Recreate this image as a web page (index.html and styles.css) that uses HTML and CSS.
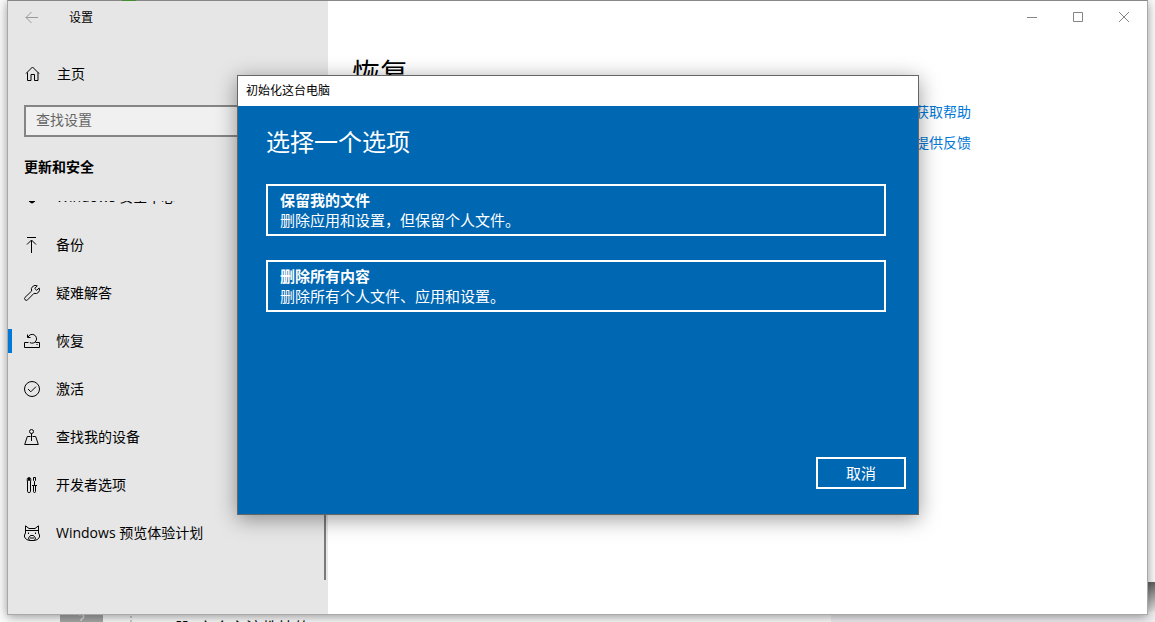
FILE: index.html
```html
<!DOCTYPE html>
<html lang="zh-CN">
<head>
<meta charset="utf-8">
<title>设置</title>
<link rel="stylesheet" href="styles.css">
</head>
<body>
<div class="backdrop" aria-hidden="true">
  <span class="backdrop-tab"></span>
  <span class="backdrop-tile">?</span>
  <span class="backdrop-dots"></span>
  <span class="backdrop-text">【】六个主流教技的</span>
  <span class="backdrop-strip"></span>
  <span class="backdrop-edge"></span>
</div>

<div class="window">
  <aside class="sidebar">
    <header class="titlebar">
      <button class="back" aria-label="后退">
        <svg width="14" height="14" viewBox="0 0 14 14"><path d="M13 6.500H1M6.500 1 1 6.500 6.500 12"/></svg>
      </button>
      <span class="app-title">设置</span>
    </header>
    <a class="home" href="#">
      <svg class="icon" width="16" height="16" viewBox="0 0 16 16"><path d="M1 7.500 7.500 1 14 7.500M2.500 6.500v8H6V8.500h3.500v6H13v-8"/></svg>
      <span>主页</span>
    </a>
    <input class="search" type="text" placeholder="查找设置" aria-label="查找设置">
    <h2 class="section-title">更新和安全</h2>
    <nav class="nav">
      <a class="nav-item nav-item-first" href="#">
        <svg class="icon" width="16" height="16" viewBox="0 0 16 16"><path d="M8 1 3 3v6q1 3 5 5 4-2 5-5V3z"/><path class="fill" d="M8 1v7h5v1q-1 3-5 5zM3 8h5v6q-4-2-5-5z"/></svg>
        <span>Windows 安全中心</span>
      </a>
      <a class="nav-item" href="#">
        <svg class="icon" width="16" height="16" viewBox="0 0 16 16"><path d="M3 .5h9M7.500 16V3.500M3 7.500 7.500 3 12 7.500"/></svg>
        <span>备份</span>
      </a>
      <a class="nav-item" href="#">
        <svg class="icon" width="16" height="16" viewBox="0 0 16 16"><path d="M13.300.9A4 4 0 0 0 7.700 6L1.100 12.300a1.700 1.700 0 0 0 2.500 2.500L10 8.300A4 4 0 0 0 15.200 3L12.700 5.300 10.700 3.400z"/></svg>
        <span>疑难解答</span>
      </a>
      <a class="nav-item nav-item-current" href="#" aria-current="page">
        <svg class="icon" width="16" height="16" viewBox="0 0 16 16"><path d="M4.500 9.500h-4v5h15v-5h-4M12.500 11.500h1M3.500 1.500v3h3M4 4.300A4.400 4.400 0 1 1 5.800 9.500"/></svg>
        <span>恢复</span>
      </a>
      <a class="nav-item" href="#">
        <svg class="icon" width="16" height="16" viewBox="0 0 16 16"><circle cx="8" cy="8" r="7.500"/><path d="m4 8 2.800 2.800L12 5.600"/></svg>
        <span>激活</span>
      </a>
      <a class="nav-item" href="#">
        <svg class="icon" width="16" height="16" viewBox="0 0 16 16"><circle cx="7.500" cy="2.500" r="2"/><path d="M7.500 4.500V12M6.500 7.500H3.300L.7 15.500h13.600L11.700 7.500H8.500"/></svg>
        <span>查找我的设备</span>
      </a>
      <a class="nav-item" href="#">
        <svg class="icon" width="16" height="16" viewBox="0 0 16 16"><path d="M4.500 .5v3h1v-3Q7 1 6.800 2.800L6.500 5v9.500q0 1-1.500 1t-1.500-1V5L3.200 2.800Q3 1 4.500 .5M9.500.5h2v3l-1 1-1-1zM10.500 4.500V9M8 8.500h5M9.500 9v5.500q0 1 1 1t1-1V9"/></svg>
        <span>开发者选项</span>
      </a>
      <a class="nav-item" href="#">
        <svg class="icon" width="16" height="16" viewBox="0 0 16 16"><path d="M1.500 8V.8L5 3.500h6L14.500.8V8M1.500 5.500h13M1.500 8 .5 10v2l2 2.500 3 1h5l3-1 2-2.500v-2l-1-2M4.500 7.500V9M11.500 7.500V9M6.500 10.500h3M5.500 15.500l-1-2.500 2-2.500M10.500 15.500l1-2.500-2-2.500M6 13h4"/></svg>
        <span>Windows 预览体验计划</span>
      </a>
    </nav>
  </aside>

  <main class="content">
    <div class="window-controls">
      <button aria-label="最小化"><svg width="12" height="12" viewBox="0 0 12 12"><path d="M1 6.500h10"/></svg></button>
      <button aria-label="最大化"><svg width="12" height="12" viewBox="0 0 12 12"><path d="M1.500 1.500h9v9h-9z"/></svg></button>
      <button aria-label="关闭"><svg width="12" height="12" viewBox="0 0 12 12"><path d="m1 1 10 10M11 1 1 11"/></svg></button>
    </div>
    <div class="page">
      <h1 class="page-title">恢复</h1>
      <div class="links">
        <a href="#">获取帮助</a>
        <a href="#">提供反馈</a>
      </div>
    </div>
  </main>
</div>

<section class="dialog" role="dialog" aria-labelledby="dialog-name">
  <header class="dialog-titlebar" id="dialog-name">初始化这台电脑</header>
  <div class="dialog-body">
    <h2 class="dialog-title">选择一个选项</h2>
    <div class="options">
      <button class="option"><strong>保留我的文件</strong><span>删除应用和设置，但保留个人文件。</span></button>
      <button class="option"><strong>删除所有内容</strong><span>删除所有个人文件、应用和设置。</span></button>
    </div>
    <footer class="dialog-footer"><button class="cancel">取消</button></footer>
  </div>
</section>
</body>
</html>
```
FILE: styles.css
```css
* {
  box-sizing: border-box;
}

body {
  position: relative;
  display: flex;
  height: 100vh;
  margin: 0;
  padding: 0 7px 7px;
  overflow: hidden;
  background: #fcfcfc;
  color: #000;
  font-family: "Open Sans", "Noto Sans CJK SC", sans-serif;
  font-size: 14px;
  line-height: 20px;
}

a {
  color: inherit;
  text-decoration: none;
}

button,
input {
  margin: 0;
  border-radius: 0;
  font: inherit;
}

h1,
h2 {
  margin: 0;
}

svg {
  display: block;
  flex: none;
  fill: none;
  stroke: currentColor;
}

.icon .fill {
  fill: currentColor;
}

/* Desktop seen around the window */
.backdrop span {
  position: absolute;
}

.backdrop .backdrop-tab {
  top: 0;
  left: 122px;
  z-index: 1;
  width: 14px;
  height: 1px;
  background: #3f8f2f;
}

.backdrop-tile {
  left: 60px;
  bottom: 0;
  width: 43px;
  height: 10px;
  background: #a9a9a9;
  color: #eee;
  line-height: 14px;
  text-align: center;
}

.backdrop-dots {
  left: 130px;
  bottom: 0;
  height: 10px;
  border-left: 2px dotted #ccc;
}

.backdrop-text {
  left: 166px;
  bottom: -16px;
  font-size: 16px;
}

.backdrop-strip {
  left: 831px;
  right: 0;
  bottom: 0;
  height: 10px;
  background: #f0eef0;
}

.backdrop-edge {
  right: 0;
  bottom: 10px;
  width: 8px;
  height: 30px;
  background: linear-gradient(#606060, #e8e8e8);
}

/* Settings window */
.window {
  position: relative;
  display: grid;
  flex: 1;
  grid-template-columns: 320px 1fr;
  border: 1px solid #a8a8a8;
  border-top-color: #888;
  background: #fff;
  box-shadow: 0 2px 10px rgba(0, 0, 0, 0.4);
}

.sidebar {
  position: relative;
  display: flex;
  flex-direction: column;
  min-height: 0;
  background: #e6e6e6;
}

.sidebar::after {
  position: absolute;
  right: 2px;
  bottom: 34px;
  width: 2px;
  height: 240px;
  background: #7a7a7a;
  content: "";
}

.titlebar {
  display: flex;
  align-items: center;
  gap: 30px;
  height: 34px;
  padding-left: 17px;
}

.back {
  padding: 0;
  border: 0;
  background: none;
  color: #999;
}

.app-title {
  font-size: 12px;
}

.home {
  display: flex;
  align-items: center;
  gap: 16px;
  height: 48px;
  margin-top: 15px;
  padding-left: 17px;
}

.search {
  height: 32px;
  margin: 7px 16px 0;
  padding: 0 10px 4px;
  border: 2px solid #858585;
  background: #f0f0f0;
}

.search::placeholder {
  color: #666;
  opacity: 1;
}

.section-title {
  margin: 20px 16px 24px;
  font-size: 14px;
  line-height: 20px;
}

.nav {
  flex: 1;
  min-height: 0;
  overflow: hidden;
}

.nav-item {
  display: flex;
  align-items: center;
  gap: 16px;
  height: 48px;
  padding-left: 16px;
}

.nav-item-first {
  margin-top: -28px;
}

.nav-item-current {
  background: linear-gradient(#0078d7, #0078d7) left center / 4px 24px no-repeat;
}

.content {
  min-width: 0;
}

.window-controls {
  display: flex;
  justify-content: flex-end;
}

.window-controls button {
  display: grid;
  place-items: center;
  width: 46px;
  height: 32px;
  padding: 0;
  border: 0;
  background: none;
  color: #858585;
}

.page {
  display: grid;
  grid-template-columns: 563px 1fr;
  padding: 21px 24px;
}

.page-title {
  font-size: 28px;
  font-weight: 400;
  line-height: 38px;
}

.links {
  display: grid;
  gap: 11px;
  align-content: start;
  margin-top: 48px;
  color: #0078d7;
}

/* Reset dialog */
.dialog {
  position: absolute;
  top: 75px;
  right: 236px;
  left: 237px;
  border: 1px solid #666;
  background: #0067b3;
  box-shadow: 0 4px 20px rgba(0, 0, 0, 0.4);
  color: #fff;
}

.dialog-titlebar {
  padding: 0 8px;
  background: #fff;
  color: #000;
  font-size: 12px;
  line-height: 30px;
}

.dialog-body {
  padding: 20px 12px 25px 28px;
}

.dialog-title {
  font-size: 24px;
  font-weight: 400;
  line-height: 32px;
}

.options {
  display: grid;
  gap: 24px;
  margin: 26px 20px 0 0;
}

.option {
  display: grid;
  padding: 4px 12px;
  border: 2px solid #fff;
  background: none;
  color: inherit;
  font-size: 15px;
  line-height: 20px;
  text-align: left;
}

.dialog-footer {
  display: flex;
  justify-content: flex-end;
  margin-top: 145px;
}

.cancel {
  width: 90px;
  height: 32px;
  padding: 0;
  border: 2px solid #fff;
  background: none;
  color: inherit;
  font-size: 15px;
}
```
